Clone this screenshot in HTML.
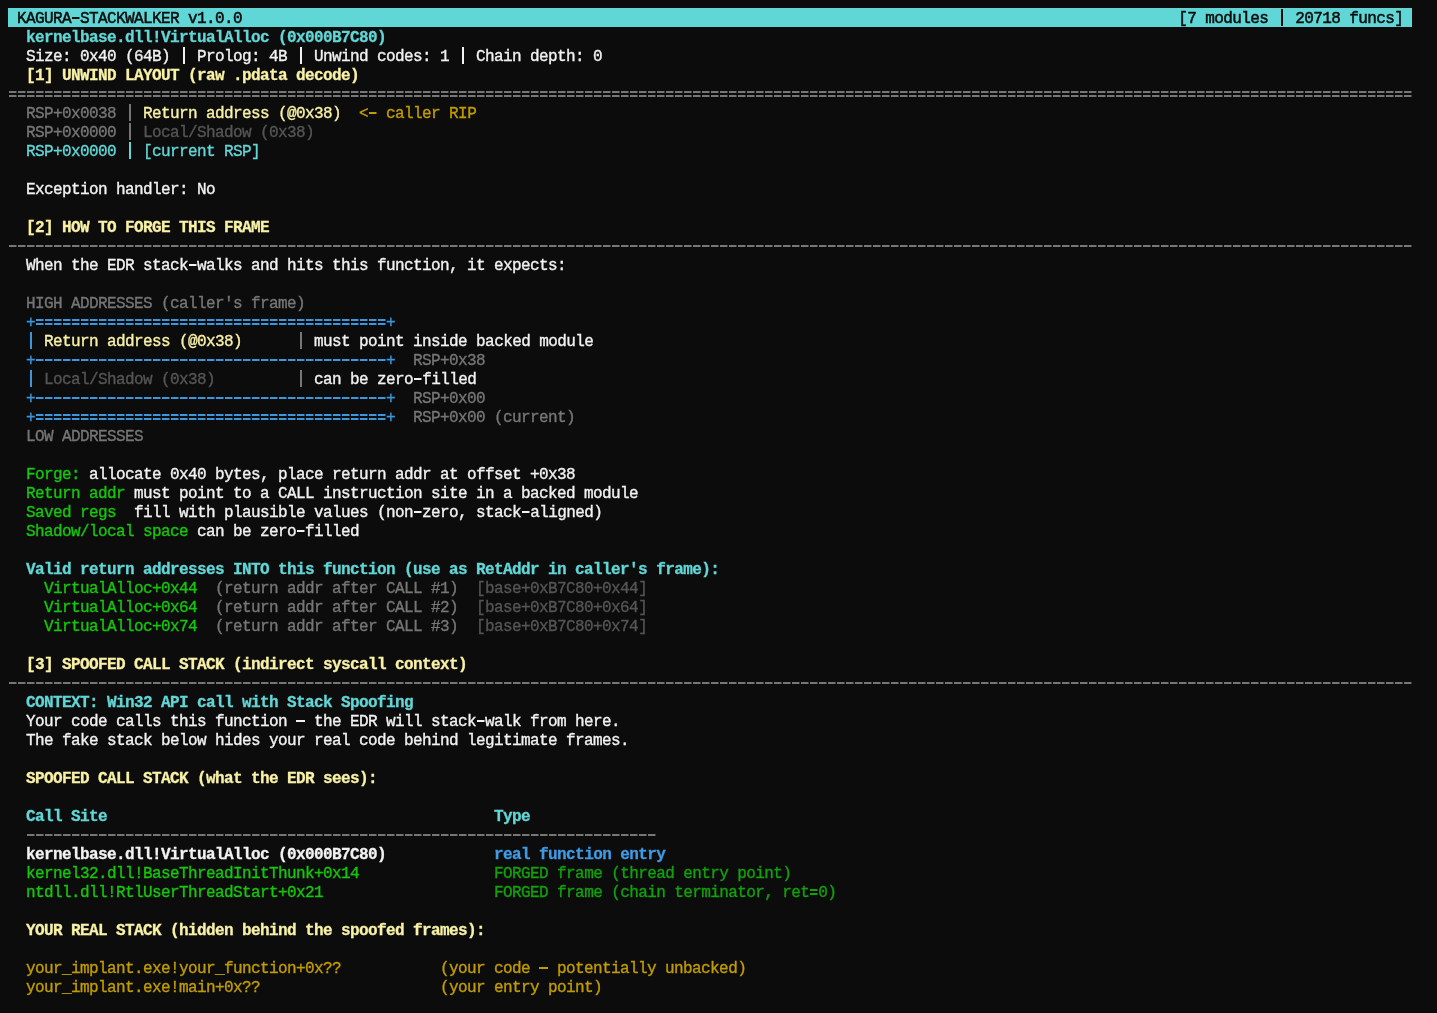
<!DOCTYPE html>
<html><head><meta charset="utf-8"><style>
html,body{margin:0;padding:0;background:#0c0c0c;width:1437px;height:1013px;overflow:hidden}
pre{will-change:transform;position:absolute;left:8px;top:10px;margin:0;font-family:"Liberation Mono",monospace;font-size:16px;letter-spacing:-0.6px;line-height:19px;color:#cccccc;white-space:pre;-webkit-text-stroke:0.35px currentColor}
.hdr{background:#61d6d6;color:#0c0c0c;display:inline-block;box-sizing:border-box;height:19px;vertical-align:top;position:relative;top:-2px;padding-top:2px;margin-bottom:-2px;-webkit-text-stroke:0.5px currentColor}
.w{color:#f2f2f2}
.W{color:#f2f2f2}
.wb{color:#f2f2f2;font-weight:bold;-webkit-text-stroke:0.3px currentColor}
.c{color:#61d6d6}
.cb{color:#61d6d6;font-weight:bold;-webkit-text-stroke:0.3px currentColor}
.Y{color:#f9f1a5}
.yb{color:#f9f1a5;font-weight:bold;-webkit-text-stroke:0.3px currentColor}
.y{color:#c19c00}
.g{color:#767676}
.d{color:#555555}
.b{color:#3a96dd}
.bb{color:#3f9be6;font-weight:bold;-webkit-text-stroke:0.3px currentColor}
.gr{color:#13a10e}
.G{color:#16c60c}
i{display:inline-block;height:19px;vertical-align:top;position:relative;top:-2px;font-style:normal}
.dl{background:linear-gradient(to right,currentColor 0 7px,transparent 8px) 1px 9px/9px 2px repeat-x}
.el{background:linear-gradient(to right,currentColor 0 7px,transparent 8px) 1px 7px/9px 2px repeat-x,linear-gradient(to right,currentColor 0 7px,transparent 8px) 1px 11px/9px 2px repeat-x}
.vb{background:linear-gradient(currentColor,currentColor) 4px 1px/2px 17px no-repeat}
.em{background:linear-gradient(currentColor,currentColor) 0 9px/9px 2px no-repeat}
</style></head><body><pre><span class="hdr"> KAGURA<i class="dl" style="width:9px"></i>STACKWALKER v1.0.0                                                                                                        [7 modules <i class="vb" style="width:9px"></i> 20718 funcs] </span>
  <span class="cb">kernelbase.dll!VirtualAlloc (0x000B7C80)</span>
<span class="w">  Size: 0x40 (64B) <i class="vb" style="width:9px"></i> Prolog: 4B <i class="vb" style="width:9px"></i> Unwind codes: 1 <i class="vb" style="width:9px"></i> Chain depth: 0</span>
  <span class="yb">[1] UNWIND LAYOUT (raw .pdata decode)</span>
<span class="g"><i class="el" style="width:1404px"></i></span>
<span class="g">  RSP+0x0038 <i class="vb" style="width:9px"></i> </span><span class="Y">Return address (@0x38)</span><span class="y">  &lt;<i class="dl" style="width:9px"></i> caller RIP</span>
<span class="g">  RSP+0x0000 <i class="vb" style="width:9px"></i> </span><span class="d">Local/Shadow (0x38)</span>
<span class="c">  RSP+0x0000 <i class="vb" style="width:9px"></i> [current RSP]</span>

<span class="w">  Exception handler: No</span>

  <span class="yb">[2] HOW TO FORGE THIS FRAME</span>
<span class="g"><i class="dl" style="width:1404px"></i></span>
<span class="w">  When the EDR stack<i class="dl" style="width:9px"></i>walks and hits this function, it expects:</span>

<span class="g">  HIGH ADDRESSES (caller's frame)</span>
<span class="b">  +<i class="el" style="width:351px"></i>+</span>
<span class="b">  <i class="vb" style="width:9px"></i> </span><span class="Y">Return address (@0x38)      </span><span class="g"><i class="vb" style="width:9px"></i></span> <span class="W">must point inside backed module</span>
<span class="b">  +<i class="dl" style="width:351px"></i>+</span><span class="g">  RSP+0x38</span>
<span class="b">  <i class="vb" style="width:9px"></i> </span><span class="d">Local/Shadow (0x38)         </span><span class="g"><i class="vb" style="width:9px"></i></span> <span class="W">can be zero<i class="dl" style="width:9px"></i>filled</span>
<span class="b">  +<i class="dl" style="width:351px"></i>+</span><span class="g">  RSP+0x00</span>
<span class="b">  +<i class="el" style="width:351px"></i>+</span><span class="g">  RSP+0x00 (current)</span>
<span class="g">  LOW ADDRESSES</span>

<span class="G">  Forge: </span><span class="w">allocate 0x40 bytes, place return addr at offset +0x38</span>
<span class="G">  Return addr </span><span class="w">must point to a CALL instruction site in a backed module</span>
<span class="G">  Saved regs  </span><span class="w">fill with plausible values (non<i class="dl" style="width:9px"></i>zero, stack<i class="dl" style="width:9px"></i>aligned)</span>
<span class="G">  Shadow/local space </span><span class="w">can be zero<i class="dl" style="width:9px"></i>filled</span>

  <span class="cb">Valid return addresses INTO this function (use as RetAddr in caller's frame):</span>
    <span class="G">VirtualAlloc+0x44</span><span class="g">  (return addr after CALL #1)</span><span class="d">  [base+0xB7C80+0x44]</span>
    <span class="G">VirtualAlloc+0x64</span><span class="g">  (return addr after CALL #2)</span><span class="d">  [base+0xB7C80+0x64]</span>
    <span class="G">VirtualAlloc+0x74</span><span class="g">  (return addr after CALL #3)</span><span class="d">  [base+0xB7C80+0x74]</span>

  <span class="yb">[3] SPOOFED CALL STACK (indirect syscall context)</span>
<span class="g"><i class="dl" style="width:1404px"></i></span>
  <span class="cb">CONTEXT: Win32 API call with Stack Spoofing</span>
<span class="w">  Your code calls this function <i class="em" style="width:9px"></i> the EDR will stack<i class="dl" style="width:9px"></i>walk from here.</span>
<span class="w">  The fake stack below hides your real code behind legitimate frames.</span>

  <span class="yb">SPOOFED CALL STACK (what the EDR sees):</span>

  <span class="cb">Call Site                                           </span><span class="cb">Type</span>
<span class="g">  <i class="dl" style="width:630px"></i></span>
  <span class="wb">kernelbase.dll!VirtualAlloc (0x000B7C80)            </span><span class="bb">real function entry</span>
  <span class="G">kernel32.dll!BaseThreadInitThunk+0x14               </span><span class="gr">FORGED frame (thread entry point)</span>
  <span class="G">ntdll.dll!RtlUserThreadStart+0x21                   </span><span class="gr">FORGED frame (chain terminator, ret<i class="el" style="width:9px"></i>0)</span>

  <span class="yb">YOUR REAL STACK (hidden behind the spoofed frames):</span>

<span class="y">  your_implant.exe!your_function+0x??           (your code <i class="em" style="width:9px"></i> potentially unbacked)</span>
<span class="y">  your_implant.exe!main+0x??                    (your entry point)</span>
</pre></body></html>
